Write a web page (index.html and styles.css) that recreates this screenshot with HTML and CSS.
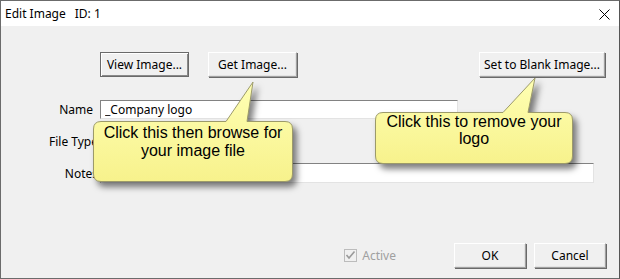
FILE: index.html
```html
<!DOCTYPE html>
<html lang="en">

<head>
    <meta charset="UTF-8">
    <meta name="viewport" content="width=device-width, initial-scale=1.0">
    <title>Edit Image</title>
    <link rel="stylesheet" href="styles.css">
</head>

<body>
    <div class="window">
        <!-- Заголовок окна -->
        <div class="titlebar">
            <span class="title">Edit Image</span>
            <span class="title-id">ID: 1</span>
            <span class="close">
                <svg width="11" height="11" viewBox="0 0 11 11">
                    <path d="M0.5 0.5 L10.5 10.5 M10.5 0.5 L0.5 10.5" stroke="#000" stroke-width="1" fill="none" />
                </svg>
            </span>
        </div>

        <div class="dialog">
            <div class="toolbar">
                <button class="btn btn-default btn-view">View Image...</button>
                <button class="btn btn-get">Get Image...</button>
                <span class="spacer"></span>
                <button class="btn btn-blank">Set to Blank Image...</button>
            </div>

            <div class="field field-name">
                <label>Name</label>
                <input class="input input-name" type="text" value="_Company logo">
            </div>

            <div class="field field-type">
                <label>File Type</label>
            </div>

            <div class="field field-notes">
                <label>Notes</label>
                <input class="input input-notes" type="text" value="">
            </div>

            <div class="footer">
                <label class="check">
                    <span class="check-box">
                        <svg width="11" height="11" viewBox="0 0 11 11">
                            <path d="M1.5 5 L4 8 L9.5 1.5" stroke="#9a9a9a" stroke-width="1.6" fill="none" />
                        </svg>
                    </span>
                    Active
                </label>
                <button class="btn btn-ok">OK</button>
                <button class="btn btn-cancel">Cancel</button>
            </div>
        </div>

        <!-- Подсказки -->
        <div class="callout callout-browse">
            <svg class="callout-shape" width="210" height="110" viewBox="0 0 210 110">
                <defs>
                    <linearGradient id="fillA" x1="0" y1="0" x2="0" y2="1">
                        <stop offset="0" stop-color="#ffffb4" />
                        <stop offset="1" stop-color="#f7f28c" />
                    </linearGradient>
                </defs>
                <path d="M8 41.5 H133 L160 2 L154 41.5 H192 Q199.5 41.5 199.5 49 V94 Q199.5 101.5 192 101.5 H8 Q0.5 101.5 0.5 94 V49 Q0.5 41.5 8 41.5 Z"
                    fill="url(#fillA)" stroke="#9c9a6a" stroke-width="1" />
            </svg>
            <div class="callout-text">Click this then browse for<br>your image file</div>
        </div>

        <div class="callout callout-blank">
            <svg class="callout-shape" width="210" height="100" viewBox="0 0 210 100">
                <defs>
                    <linearGradient id="fillB" x1="0" y1="0" x2="0" y2="1">
                        <stop offset="0" stop-color="#ffffb4" />
                        <stop offset="1" stop-color="#f7f28c" />
                    </linearGradient>
                </defs>
                <path d="M8 36.5 H128 L160 2 L153 36.5 H190 Q197.5 36.5 197.5 44 V80 Q197.5 87.5 190 87.5 H8 Q0.5 87.5 0.5 80 V44 Q0.5 36.5 8 36.5 Z"
                    fill="url(#fillB)" stroke="#9c9a6a" stroke-width="1" />
            </svg>
            <div class="callout-text">Click this to remove your<br>logo</div>
        </div>
    </div>
</body>

</html>
```

FILE: styles.css
```css
/* Окно диалога */
body {
    margin: 0;
    background-color: #f0f0f0;
    font-family: "Noto Sans", "Open Sans", sans-serif;
    font-size: 12px;
    color: #000;
}

.window {
    position: relative;
    width: 620px;
    height: 279px;
    box-sizing: border-box;
    border: 1px solid #6b6b6b;
    border-right-color: #555;
    background-color: #f0f0f0;
    display: flex;
    flex-direction: column;
    overflow: hidden;
}

.titlebar {
    height: 25px;
    background-color: #fff;
    display: flex;
    align-items: center;
    padding-left: 4px;
    flex-shrink: 0;
}

.title {
    margin-right: 9px;
}

.close {
    margin-left: auto;
    margin-right: 9px;
    display: flex;
    margin-top: 1px;
}

.dialog {
    flex: 1;
    display: flex;
    flex-direction: column;
}

/* Кнопки */
.btn {
    font-family: inherit;
    font-size: 12px;
    color: #000;
    height: 25px;
    padding: 0;
    background-color: #f0f0f0;
    border: 1px solid;
    border-color: #fff #a0a0a0 #a0a0a0 #fff;
    box-shadow: 1px 1px 0 #696969, inset -1px -1px 0 #e3e3e3;
    box-sizing: border-box;
}

.btn-default {
    border-color: #6a6a6a;
    box-shadow: inset 1px 1px 0 #fff, inset -1px -1px 0 #8a8a8a;
}

.toolbar {
    display: flex;
    margin-top: 26px;
    padding: 0 14px 0 99px;
}

.btn-view,
.btn-get {
    width: 89px;
}

.btn-get {
    margin-left: 19px;
}

.spacer {
    flex: 1;
}

.btn-blank {
    width: 126px;
}

/* Поля формы */
.field {
    display: flex;
    align-items: center;
    height: 20px;
}

.field label {
    width: 97px;
    text-align: right;
    white-space: nowrap;
    flex-shrink: 0;
}

.field-name label {
    width: 92px;
    padding-right: 7px;
}

.field-notes label {
    width: 97px;
    padding-right: 2px;
}

.field-name {
    margin-top: 22px;
}

.field-type {
    margin-top: 12px;
}

.field-notes {
    margin-top: 12px;
}

.field-type label {
    padding-right: 2px;
}

.input {
    font-family: inherit;
    font-size: 12px;
    height: 19px;
    box-sizing: border-box;
    border: 1px solid;
    border-color: #828282 #e3e3e3 #e3e3e3 #828282;
    background-color: #fff;
    padding: 0 4px;
    margin: 0;
    outline: none;
}

.input-name {
    width: 358px;
}

.input-notes {
    width: 494px;
    height: 20px;
}

/* Нижняя панель */
.footer {
    display: flex;
    align-items: center;
    margin-top: 60px;
    padding-right: 13px;
    justify-content: flex-end;
}

.check {
    display: flex;
    align-items: center;
    color: #a0a0a0;
    margin-right: 58px;
}

.check-box {
    width: 13px;
    height: 13px;
    box-sizing: border-box;
    border: 1px solid #bcbcbc;
    background-color: #f0f0f0;
    display: flex;
    align-items: center;
    justify-content: center;
    margin-right: 5px;
}

.btn-ok,
.btn-cancel {
    width: 72px;
}

.btn-cancel {
    margin-left: 8px;
}

/* Подсказки */
.callout {
    position: absolute;
    font-family: "Liberation Sans", Arial, sans-serif;
    font-size: 16px;
    color: #000;
}

.callout-shape {
    position: absolute;
    left: 0;
    top: 0;
    filter: drop-shadow(4px 5px 3px rgba(0, 0, 0, 0.5));
}

.callout-text {
    position: relative;
    text-align: center;
    line-height: 18px;
}

.callout-browse {
    left: 92px;
    top: 79px;
    width: 210px;
    height: 110px;
}

.callout-browse .callout-text {
    width: 200px;
    padding-top: 44px;
}

.callout-blank {
    left: 374px;
    top: 75px;
    width: 210px;
    height: 100px;
}

.callout-blank .callout-text {
    width: 198px;
    padding-top: 37px;
    line-height: 17px;
}
```
